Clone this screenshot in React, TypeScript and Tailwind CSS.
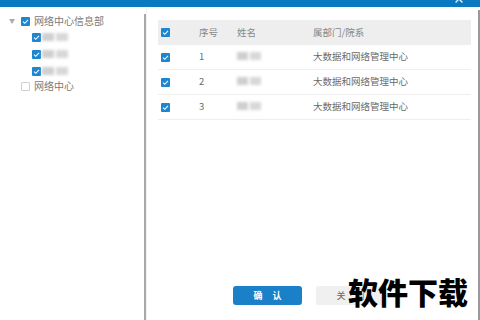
import { X } from 'lucide-react'

const font = { fontFamily: '"Noto Sans CJK SC", "Noto Sans", sans-serif' }

function Check({ on = true, size = 9 }: { on?: boolean; size?: number }) {
  if (!on) {
    return <span className="inline-block border border-[#d0d0d0] bg-white rounded-[1px]" style={{ width: size, height: size }} />
  }
  return (
    <span className="inline-flex items-center justify-center bg-[#1d86d0] rounded-[1px]" style={{ width: size, height: size }}>
      <svg viewBox="0 0 10 10" className="w-full h-full">
        <path d="M2.2 5.2 L4.2 7 L7.8 3.2" fill="none" stroke="#fff" strokeWidth="1.2" />
      </svg>
    </span>
  )
}

function Blur({ w = 24 }: { w?: number }) {
  return (
    <span className="inline-flex gap-[2px] blur-[1.5px]">
      <span className="h-[8px] bg-[#cfcfcf]" style={{ width: w / 2 }} />
      <span className="h-[8px] bg-[#d8d8d8]" style={{ width: w / 2 }} />
    </span>
  )
}

const rows = [1, 2, 3]

export default function App() {
  return (
    <div className="relative w-[480px] h-[320px] bg-white overflow-hidden" style={font}>
      {/* title bar */}
      <div className="h-[7px] bg-[#0a79c2]" />
      <X className="absolute right-[15px] top-[-7px] w-[12px] h-[12px] text-white" strokeWidth={2.5} />

      <div className="flex h-[313px]">
        {/* tree */}
        <aside className="w-[144px] pt-[8px] pl-[9px] text-[10px] text-[#7a7a7a] leading-none">
          <div className="flex items-center h-[12px]">
            <span className="text-[6px] text-[#aaa] w-[12px]">▼</span>
            <Check />
            <span className="ml-[4px]">网络中心信息部</span>
          </div>
          <div className="pl-[23px] mt-[5px] flex flex-col gap-[7px]">
            {rows.map(r => (
              <div key={r} className="flex items-center h-[10px]">
                <Check />
                <span className="ml-[1px]"><Blur w={24} /></span>
              </div>
            ))}
          </div>
          <div className="flex items-center h-[12px] mt-[4px] pl-[12px]">
            <Check on={false} />
            <span className="ml-[4px]">网络中心</span>
          </div>
        </aside>

        <div className="w-[2px] mt-[7px] bg-[#a8a8a8]" />

        {/* table panel */}
        <main className="flex-1 flex flex-col border-l border-[#f2f2f2] pl-[11px] pr-[7px] pt-[13px]">
          <div className="text-[9.5px] leading-none">
            <div className="flex items-center h-[25px] bg-[#eeeeee] text-[#888]">
              <span className="w-[41px] pl-[3px] flex"><Check /></span>
              <span className="w-[38px]">序号</span>
              <span className="w-[76px]">姓名</span>
              <span>属部门/院系</span>
            </div>
            {rows.map(r => (
              <div key={r} className="flex items-center h-[25px] border-b border-[#eeeeee] text-[#6a6a6a]">
                <span className="w-[41px] pl-[3px] flex"><Check /></span>
                <span className="w-[38px]">{r}</span>
                <span className="w-[76px]"><Blur w={22} /></span>
                <span>大数据和网络管理中心</span>
              </div>
            ))}
          </div>

          <div className="flex-1" />

          <div className="flex gap-[14px] pl-[75px] pb-[15px]">
            <button className="w-[69px] h-[19px] rounded-[3px] bg-[#1a80c8] text-white text-[9px] font-bold tracking-[10px] pl-[10px]">
              确认
            </button>
            <button className="w-[69px] h-[19px] rounded-[2px] bg-[#f0f0f0] text-[#666] text-[9px] tracking-[10px] pl-[10px]">
              关闭
            </button>
          </div>
        </main>

        <div className="w-[2px] mt-[3px] bg-[#9a9a9a]" />
      </div>

      {/* watermark */}
      <div className="absolute left-[348px] top-[276px] text-[30px] text-black leading-none" style={{ fontFamily: '"Noto Sans CJK SC", sans-serif', fontWeight: 900, textShadow: '0 0 2px #fff' }}>
        软件下载
      </div>
    </div>
  )
}
